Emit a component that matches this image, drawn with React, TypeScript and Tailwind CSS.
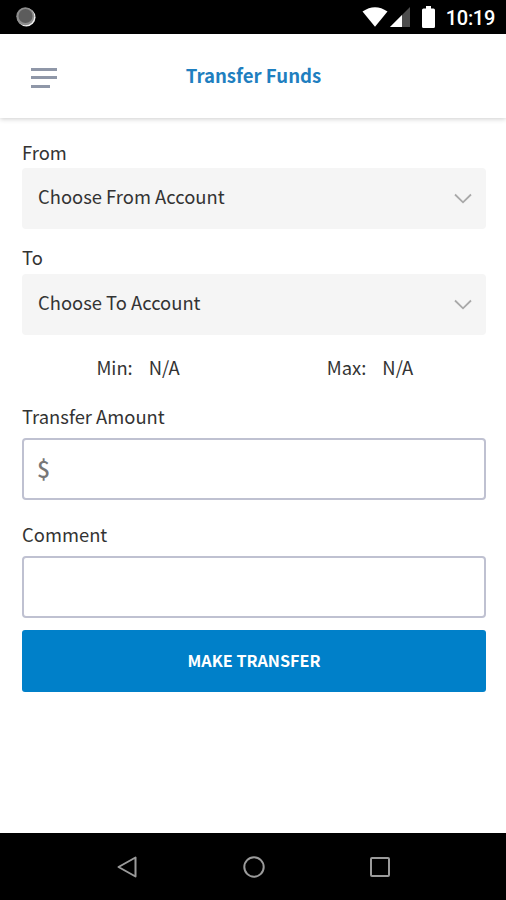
import { useState } from 'react'

const StatusBar = () => (
    <div className="h-[34px] shrink-0 bg-black flex items-center justify-between pl-4 pr-[11px]">
        <svg width="20" height="20" viewBox="0 0 20 20">
            <circle cx="10.3" cy="10.3" r="9.200" fill="#f0f0f0" />
            <circle cx="9.300" cy="9.300" r="9" fill="#8d8d8d" />
            <circle cx="9.500" cy="9" r="7" fill="#5c5c5c" />
        </svg>
        <div className="flex items-center">
            <svg width="26" height="20" viewBox="0 0 26 20" fill="#fff">
                <path d="M0.500 4.500Q13 -4 25.500 4.500L13 19.800Z" />
            </svg>
            <svg className="ml-[2px]" width="20" height="20" viewBox="0 0 20 20">
                <path d="M0 20L20 0V20Z" fill="#4d4d4d" />
                <path d="M0 20L12 8V20Z" fill="#fff" />
            </svg>
            <svg className="ml-[12px]" width="13" height="22" viewBox="0 0 13 22" fill="#fff">
                <path d="M4 0h5v2.500h2.500q1.500 0 1.500 1.500v16.500q0 1.500-1.500 1.500h-10q-1.500 0-1.500-1.500v-16.500q0-1.500 1.500-1.500h2.500z" />
            </svg>
            <span className="ml-[11px] pt-[2px] text-[20px] leading-[24px] font-medium tracking-[-0.3px] text-white font-['Roboto',sans-serif]">10:19</span>
        </div>
    </div>
)

const Header = ({ title }: { title: string }) => (
    <div className="h-[84px] shrink-0 bg-white flex items-center px-[31px] shadow-[0_1px_5px_rgba(0,0,0,0.2)]">
        <button className="w-[26px] pt-[3px] flex flex-col gap-[5.500px]" aria-label="Menu">
            <span className="h-[3px] w-[26px] bg-[#8f97a8]" />
            <span className="h-[3px] w-[26px] bg-[#8f97a8]" />
            <span className="h-[3px] w-[19px] bg-[#8f97a8]" />
        </button>
        <h1 className="flex-1 mr-[25px] pb-[2px] text-center text-[18.6px] leading-[24px] font-bold text-[#1f7fc0]">{title}</h1>
    </div>
)

const Label = ({ children }: { children: string }) => (
    <div className="h-[30px] text-[18.4px] leading-[29px] text-[#333]">{children}</div>
)

const Select = ({ placeholder }: { placeholder: string }) => (
    <button className="h-[61px] w-full rounded-[4px] bg-[#f5f5f5] flex items-center justify-between pl-4 pr-[14px]">
        <span className="pb-[6px] text-[18.4px] leading-[28px] text-[#333]">{placeholder}</span>
        <svg width="18" height="11" viewBox="0 0 18 11" fill="none" stroke="#a9a9a9" strokeWidth="1.800">
            <path d="M1 1.500L9 9.300L17 1.500" />
        </svg>
    </button>
)

const Limit = ({ name, value }: { name: string, value: string }) => (
    <div className="flex-1 flex justify-center gap-4 text-[18.4px] leading-[30px] text-[#333]">
        <span>{name}</span>
        <span>{value}</span>
    </div>
)

const NavBar = () => (
    <div className="h-[67px] shrink-0 bg-black flex items-center justify-center gap-[104.5px] pl-px">
        <svg width="22" height="22" viewBox="0 0 22 22" fill="none" stroke="#9b9b9b" strokeWidth="2" strokeLinejoin="round">
            <path d="M2.500 11L19.500 1.500V20.500Z" />
        </svg>
        <svg width="22" height="22" viewBox="0 0 22 22" fill="none" stroke="#9b9b9b" strokeWidth="2">
            <circle cx="11" cy="11" r="9.700" />
        </svg>
        <svg width="22" height="22" viewBox="0 0 22 22" fill="none" stroke="#9b9b9b" strokeWidth="2">
            <rect x="2" y="2" width="18" height="18" rx="1" />
        </svg>
    </div>
)

export default function App() {
    const [amount, setAmount] = useState('');
    const [comment, setComment] = useState('');

    return (
        <div className="w-[506px] h-[900px] flex flex-col bg-white overflow-hidden font-['Noto_Sans_CJK_SC',sans-serif]">
            <StatusBar />
            <Header title="Transfer Funds" />
            <div className="flex-1 flex flex-col pl-[22px] pr-5 pt-5">
                <Label>From</Label>
                <Select placeholder="Choose From Account" />
                <div className="h-[14px]" />
                <Label>To</Label>
                <div className="h-px" />
                <Select placeholder="Choose To Account" />
                <div className="flex pt-[17px] pb-5">
                    <Limit name="Min:" value="N/A" />
                    <Limit name="Max:" value="N/A" />
                </div>
                <Label>Transfer Amount</Label>
                <div className="h-[62px] mt-[6px] rounded-[4px] border-2 border-[#bfc1d1] flex items-center px-[13px]">
                    <span className="pb-[2px] text-[23px] leading-[30px] font-medium text-[#777]">$</span>
                    <input
                        className="flex-1 ml-2 text-[18.4px] outline-none"
                        value={amount}
                        onChange={(e) => setAmount(e.target.value)}
                    />
                </div>
                <div className="h-5" />
                <Label>Comment</Label>
                <input
                    className="h-[62px] mt-[6px] rounded-[4px] border-2 border-[#bfc1d1] px-[14px] text-[18.4px] outline-none"
                    value={comment}
                    onChange={(e) => setComment(e.target.value)}
                />
                <button className="h-[62px] mt-3 rounded-[3px] bg-[#0080c9] pb-[3px] text-[16.2px] leading-[24px] font-bold text-white">
                    MAKE TRANSFER
                </button>
            </div>
            <NavBar />
        </div>
    )
}
